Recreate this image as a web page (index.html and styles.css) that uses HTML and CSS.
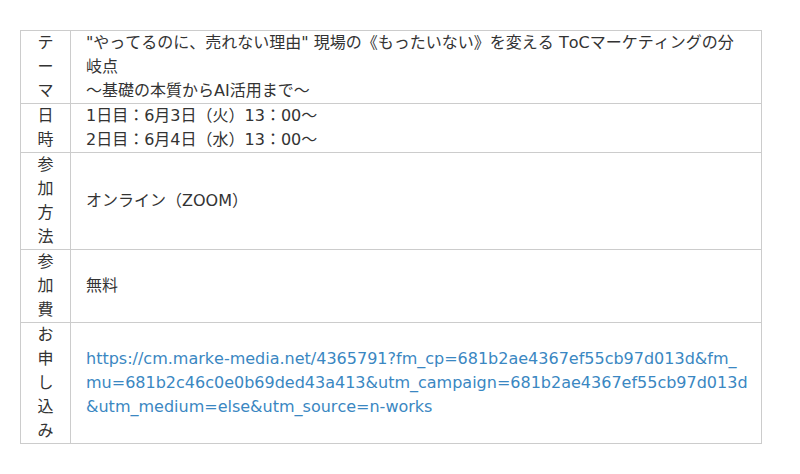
FILE: index.html
```html
<!DOCTYPE html>
<html lang="ja">
<head>
<meta charset="utf-8">
<link rel="stylesheet" href="styles.css">
</head>
<body>
<div class="page">
<table class="info">
  <tr>
    <th class="label">テーマ</th>
    <td class="value">"やってるのに、売れない理由" 現場の《もったいない》を変える ToCマーケティングの分岐点<br>～基礎の本質からAI活用まで～</td>
  </tr>
  <tr>
    <th class="label">日時</th>
    <td class="value">1日目：6月3日（火）13：00～<br>2日目：6月4日（水）13：00～</td>
  </tr>
  <tr>
    <th class="label">参加方法</th>
    <td class="value">オンライン（ZOOM）</td>
  </tr>
  <tr>
    <th class="label">参加費</th>
    <td class="value">無料</td>
  </tr>
  <tr>
    <th class="label">お申し込み</th>
    <td class="value"><a class="link" href="#">https://cm.marke-media.net/4365791?fm_cp=681b2ae4367ef55cb97d013d&amp;fm_mu=681b2c46c0e0b69ded43a413&amp;utm_campaign=681b2ae4367ef55cb97d013d&amp;utm_medium=else&amp;utm_source=n-works</a></td>
  </tr>
</table>
</div>
</body>
</html>
```
FILE: styles.css
```css
html, body {
  margin: 0;
  padding: 0;
  background: #fff;
}
.page {
  padding: 30px 20px;
}
.info {
  width: 742px;
  border-collapse: collapse;
  font-family: "DejaVu Sans", "Noto Sans CJK JP", sans-serif;
  font-size: 16px;
  line-height: 24px;
  color: #333;
  font-kerning: none;
}
.info th, .info td {
  border: 1px solid #ccc;
  padding: 0 15px;
  vertical-align: middle;
}
.label {
  width: 19px;
  font-weight: normal;
  text-align: center;
}
.info td.value {
  padding-right: 13px;
  text-align: left;
  word-break: break-all;
}
.link {
  color: #3a87c2;
  text-decoration: none;
}
```
